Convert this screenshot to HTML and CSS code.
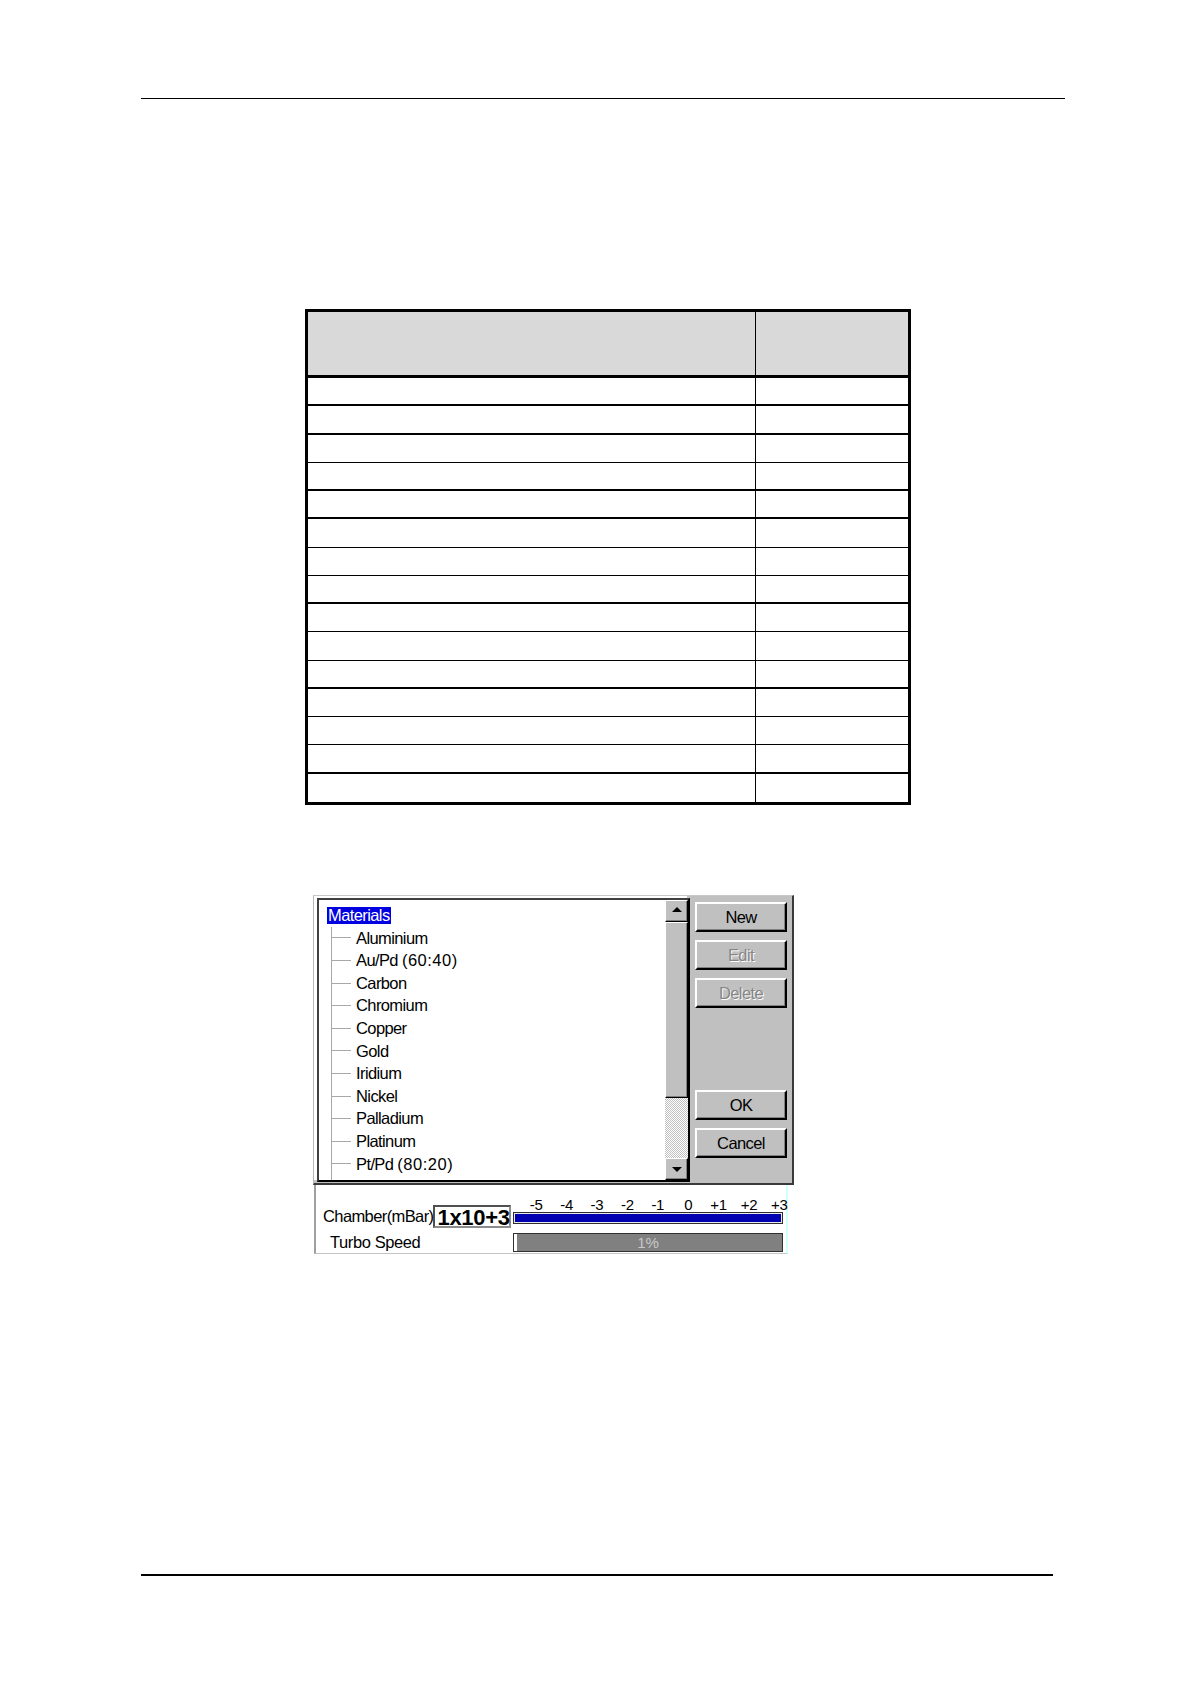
FILE: index.html
```html
<!DOCTYPE html>
<html>
<head>
<meta charset="utf-8">
<title>Materials</title>
<link rel="stylesheet" href="styles.css">
</head>
<body>
<div class="page">
  <div class="rule-top"></div>

  <div class="tbl">
    <div class="tr head"><div class="c1"></div><div class="c2"></div></div>
    <div class="tr thick"><div class="c1"></div><div class="c2"></div></div>
    <div class="tr thick"><div class="c1"></div><div class="c2"></div></div>
    <div class="tr"><div class="c1"></div><div class="c2"></div></div>
    <div class="tr thick"><div class="c1"></div><div class="c2"></div></div>
    <div class="tr thick"><div class="c1"></div><div class="c2"></div></div>
    <div class="tr"><div class="c1"></div><div class="c2"></div></div>
    <div class="tr"><div class="c1"></div><div class="c2"></div></div>
    <div class="tr thick"><div class="c1"></div><div class="c2"></div></div>
    <div class="tr"><div class="c1"></div><div class="c2"></div></div>
    <div class="tr"><div class="c1"></div><div class="c2"></div></div>
    <div class="tr thick"><div class="c1"></div><div class="c2"></div></div>
    <div class="tr"><div class="c1"></div><div class="c2"></div></div>
    <div class="tr"><div class="c1"></div><div class="c2"></div></div>
    <div class="tr thick"><div class="c1"></div><div class="c2"></div></div>
    <div class="tr"><div class="c1"></div><div class="c2"></div></div>
  </div>

  <div class="dialog">
    <div class="listbox">
      <div class="tree">
        <div class="root"><span class="sel">Materials</span></div>
        <ul class="children">
          <li>Aluminium</li>
          <li>Au/Pd <span class="num">(60:40)</span></li>
          <li>Carbon</li>
          <li>Chromium</li>
          <li>Copper</li>
          <li>Gold</li>
          <li>Iridium</li>
          <li>Nickel</li>
          <li>Palladium</li>
          <li>Platinum</li>
          <li>Pt/Pd <span class="num">(80:20)</span></li>
          <li>Silver</li>
        </ul>
      </div>
      <div class="scrollbar">
        <div class="sb-btn"><span class="arrow-up"></span></div>
        <div class="thumb"></div>
        <div class="track"></div>
        <div class="sb-btn"><span class="arrow-down"></span></div>
      </div>
    </div>
    <div class="buttons">
      <div class="btn">New</div>
      <div class="btn disabled">Edit</div>
      <div class="btn disabled">Delete</div>
      <div class="btn ok">OK</div>
      <div class="btn">Cancel</div>
    </div>
  </div>

  <div class="status">
    <div class="srow1">
      <div class="lab-cell">
        <span class="lab">Chamber(mBar)</span>
        <span class="valbox">1x10+3</span>
      </div>
      <div class="bar-cell">
        <div class="ticks">
          <span>-5</span><span>-4</span><span>-3</span><span>-2</span><span>-1</span><span>0</span><span>+1</span><span>+2</span><span>+3</span>
        </div>
        <div class="bluebar"><div class="bluefill"></div></div>
      </div>
    </div>
    <div class="srow2">
      <div class="lab-cell2"><span class="lab">Turbo Speed</span></div>
      <div class="turbo">1%</div>
    </div>
  </div>

  <div class="rule-bottom"></div>
</div>
</body>
</html>
```

FILE: styles.css
```css
html, body {
  margin: 0;
  padding: 0;
  background: #fff;
}
.page {
  width: 1190px;
  min-height: 1684px;
  overflow: hidden;
  font-family: "Liberation Sans", Arial, sans-serif;
  font-size: 16.5px;
  letter-spacing: -0.6px;
  color: #000;
}
.rule-top {
  margin: 98px 0 0 141px;
  width: 924px;
  height: 1px;
  background: #000;
}

/* ---------- table ---------- */
.tbl {
  margin: 210px 0 0 305px;
  width: 606px;
  border: 3px solid #000;
  box-sizing: border-box;
}
.tr {
  display: flex;
  height: 28.27px;
  border-bottom: 1px solid #000;
  box-sizing: border-box;
}
.tr.thick { border-bottom-width: 2px; }
.tr:last-child { border-bottom: 0; }
.tr.head {
  height: 66px;
  border-bottom: 3px solid #000;
  background: #d9d9d9;
}
.c1 {
  width: 447px;
  border-right: 1px solid #000;
}
.c2 { flex: 1; }

/* ---------- dialog ---------- */
.dialog {
  margin: 90px 0 0 313px;
  width: 481px;
  height: 290px;
  box-sizing: border-box;
  background: #c0c0c0;
  border-top: 1px solid #c8c8c8;
  border-left: 1px solid #b8b8b8;
  border-right: 2px solid #3a3a3a;
  border-bottom: 2px solid #3a3a3a;
  padding: 2px 5px 1px 3px;
  display: flex;
  gap: 5px;
}
.listbox {
  width: 373px;
  height: 284px;
  box-sizing: border-box;
  border: 2px solid;
  border-color: #404040 #000 #000 #404040;
  box-shadow: -3px -2px 0 #fff;
  background: #fff;
  display: flex;
  overflow: hidden;
}
.tree {
  flex: 1;
  padding: 4px 0 0 8px;
  line-height: 22.6px;
  overflow: hidden;
}
.root { height: 22.6px; }
.sel {
  display: inline-block;
  line-height: 17px;
  padding: 0 1px;
  background: #0000e0;
  color: #fff;
}
.children {
  list-style: none;
  margin: 0 0 0 4px;
  padding: 0;
  border-left: 1px solid #a8a8a8;
}
.children li {
  height: 22.6px;
  padding-left: 24px;
  white-space: nowrap;
  background: linear-gradient(#a8a8a8, #a8a8a8) no-repeat 0 50% / 19px 1px;
}
.num { letter-spacing: 0.5px; }
.scrollbar {
  width: 23px;
  display: flex;
  flex-direction: column;
  background: #c0c0c0;
}
.sb-btn, .thumb {
  box-sizing: border-box;
  border: 1px solid;
  border-color: #fff #000 #000 #fff;
  box-shadow: inset -1px -1px 0 #808080;
  background: #c0c0c0;
}
.sb-btn {
  height: 22px;
  display: flex;
  align-items: center;
  justify-content: center;
}
.thumb { height: 176px; }
.track {
  flex: 1;
  background: repeating-conic-gradient(#c0c0c0 0 25%, #fff 0 50%) 0 0 / 2px 2px;
}
.arrow-up, .arrow-down {
  width: 0;
  height: 0;
  border-left: 5px solid transparent;
  border-right: 5px solid transparent;
}
.arrow-up { border-bottom: 5px solid #000; margin-top: -2px; }
.arrow-down { border-top: 5px solid #000; margin-top: 1px; }

.buttons {
  width: 92px;
  display: flex;
  flex-direction: column;
  gap: 8px;
  padding-top: 4px;
}
.btn {
  height: 30px;
  box-sizing: border-box;
  border: 2px solid;
  border-color: #fff #000 #000 #fff;
  box-shadow: inset -1px -1px 0 #808080;
  background: #c0c0c0;
  text-align: center;
  line-height: 26px;
}
.btn.disabled {
  color: #868686;
  text-shadow: 1px 1px 0 #fff;
}
.btn.ok { margin-top: 74px; }

/* ---------- status panel ---------- */
.status {
  margin: 0 0 0 314px;
  width: 474px;
  height: 69px;
  box-sizing: border-box;
  border-left: 2px solid #a0a0a0;
  border-right: 2px solid #d0ffff;
  border-bottom: 1px solid #c4c4c4;
  background: #fff;
}
.srow1 {
  display: flex;
  height: 45px;
}
.lab-cell {
  width: 197px;
  box-sizing: border-box;
  padding: 0 2px 2px 7px;
  display: flex;
  align-items: flex-end;
}
.lab {
  line-height: 21px;
  white-space: nowrap;
}
.lab-cell .lab { margin-bottom: 1px; }
.valbox {
  margin-left: auto;
  width: 78px;
  height: 23px;
  box-sizing: border-box;
  border: 2px solid;
  border-color: #505050 #8c8c8c #8c8c8c #505050;
  font-weight: bold;
  font-size: 22px;
  letter-spacing: -0.3px;
  line-height: 22px;
  padding-left: 2px;
  white-space: nowrap;
}
.bar-cell {
  width: 270px;
  display: flex;
  flex-direction: column;
}
.ticks {
  height: 27px;
  margin-left: 8px;
  display: grid;
  grid-template-columns: repeat(9, 30.4px);
  font-size: 15px;
  letter-spacing: -0.3px;
  line-height: 15px;
  align-items: end;
}
.ticks span { text-align: center; }
.bluebar {
  height: 12px;
  box-sizing: border-box;
  border: 1px solid #303030;
  padding: 1px;
  background: #e8e8e8;
}
.bluefill {
  height: 100%;
  background: #0000b0;
}
.srow2 {
  display: flex;
  height: 23px;
}
.lab-cell2 {
  width: 197px;
  box-sizing: border-box;
  padding: 2px 0 0 14px;
  letter-spacing: -0.4px;
}
.turbo {
  width: 270px;
  height: 19px;
  margin-top: 3px;
  box-sizing: border-box;
  border: 1px solid #303030;
  background: linear-gradient(to right, #fff 0 3px, #808080 3px);
  color: #c8c8c8;
  text-align: center;
  font-size: 15px;
  letter-spacing: 0;
  line-height: 17px;
}

.rule-bottom {
  margin: 320px 0 0 141px;
  width: 912px;
  height: 2px;
  background: #000;
}
```
